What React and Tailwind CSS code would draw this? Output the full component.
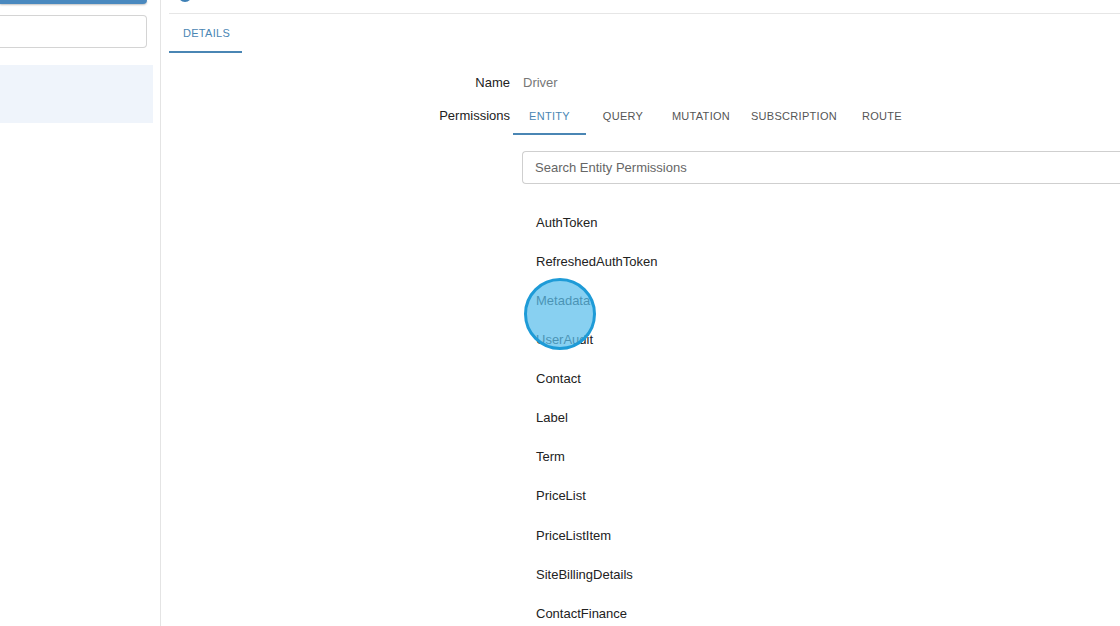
import React from "react";

const ENTITIES = [
  "AuthToken",
  "RefreshedAuthToken",
  "Metadata",
  "UserAudit",
  "Contact",
  "Label",
  "Term",
  "PriceList",
  "PriceListItem",
  "SiteBillingDetails",
  "ContactFinance",
];

const TABS = [
  { label: "ENTITY", w: "w-[73px]", active: true },
  { label: "QUERY", w: "w-[74px]" },
  { label: "MUTATION", w: "w-[82px]" },
  { label: "SUBSCRIPTION", w: "w-[104px]" },
  { label: "ROUTE", w: "w-[72px]" },
];

export default function App() {
  return (
    <div className="relative flex h-[626px] w-[1120px] overflow-hidden bg-white font-['Liberation_Sans',Arial,sans-serif] text-[#222]">
      {/* sidebar */}
      <aside className="flex w-[161px] shrink-0 flex-col border-r border-[#e4e4e4]">
        <div className="h-[4px] w-[147px] shrink-0 rounded-br-[4px] bg-[#4a89bf] shadow-[0_1px_2px_rgba(0,0,0,0.25)]" />
        <div className="mt-[11px] h-[33px] w-[147px] shrink-0 rounded-r-[4px] border border-l-0 border-[#d4d4d4]" />
        <div className="mt-[17px] h-[58px] w-[153px] shrink-0 bg-[#eff4fb]" />
      </aside>

      {/* main */}
      <main className="flex flex-1 flex-col pl-[8px]">
        <div className="relative h-[14px] shrink-0 border-b border-[#e6e6e6]">
          <div className="absolute left-[9px] top-[-12px] h-[14px] w-[14px] rounded-full bg-[#3d7fb5]" />
        </div>
        <div className="flex shrink-0">
          <div className="flex h-[39px] w-[73px] items-center justify-center border-b-2 border-[#4a86b4] pl-[2px] pt-[2px] text-[11px] tracking-[0.3px] text-[#4a86b4]">
            DETAILS
          </div>
        </div>

        <div className="mt-[19px] grid shrink-0 grid-cols-[341px_1fr] text-[13px]">
          <div className="flex h-[22px] items-center justify-end">Name</div>
          <div className="flex h-[22px] items-center pl-[13px] text-[#777]">Driver</div>

          <div className="mt-[3px] flex h-[38px] items-center justify-end">Permissions</div>
          <div className="mt-[3px] flex pl-[3px]">
            {TABS.map((t) => (
              <div
                key={t.label}
                className={
                  "flex h-[38px] items-center justify-center text-[11px] tracking-[0.3px] " +
                  t.w +
                  (t.active ? " border-b-2 border-[#4a86b4] pt-[2px] text-[#4a86b4]" : " text-[#555]")
                }
              >
                {t.label}
              </div>
            ))}
          </div>

          <div />
          <div className="pl-[12px]">
            <div className="mt-[16px] flex h-[33px] w-[620px] items-center rounded-l-[4px] border border-r-0 border-[#cfcfcf] pl-[12px] text-[13px] text-[#666]">
              Search Entity Permissions
            </div>
            <ul className="mt-[19px] pl-[14px]">
              {ENTITIES.map((e) => (
                <li key={e} className="flex h-[39.1px] items-center">
                  {e}
                </li>
              ))}
            </ul>
          </div>
        </div>
      </main>

      {/* click indicator */}
      <div className="absolute left-[524px] top-[278px] h-[72px] w-[72px] rounded-full border-[3px] border-[#1e9bd7] bg-[rgba(90,190,235,0.72)]" />
    </div>
  );
}
